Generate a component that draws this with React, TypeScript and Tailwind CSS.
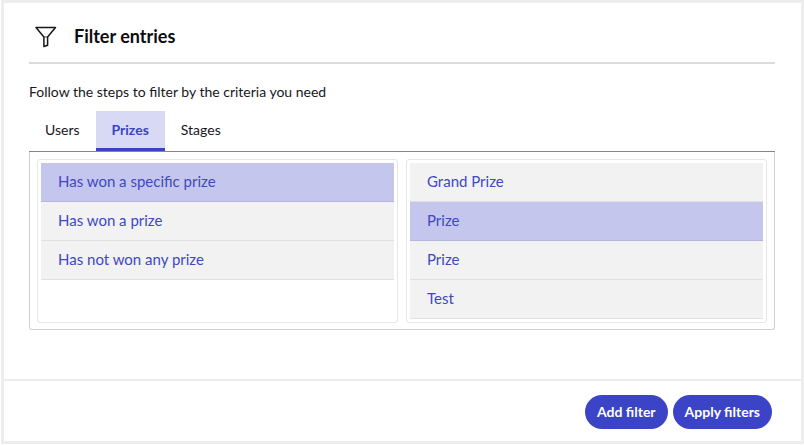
import { useState } from "react"
import clsx from "clsx"

const tabs = ["Users", "Prizes", "Stages"]
const conditions = ["Has won a specific prize", "Has won a prize", "Has not won any prize"]
const prizes = ["Grand Prize", "Prize", "Prize", "Test"]

function FilterIcon() {
  return (
    <svg width="22" height="22" viewBox="0 0 22 22" fill="none" stroke="#17171c" strokeWidth="1.5" strokeLinejoin="round" aria-hidden="true">
      <path d="M1 1.5h19.5L12.6 11v8.2l-3.7 1.3V11z" />
      <path d="M9 11h3.6" strokeWidth="0.8" />
    </svg>
  )
}

type OptionListProps = {
  label: string
  options: string[]
  selected: number
  onSelect: (index: number) => void
}

function OptionList({ label, options, selected, onSelect }: OptionListProps) {
  return (
    <ul aria-label={label} className="min-w-0 flex-1 rounded-[3px] border border-[#e6e6e8] p-[3px]">
      {options.map((option, i) => (
        <li key={i}>
          <button
            type="button"
            aria-pressed={i === selected}
            onClick={() => onSelect(i)}
            className={clsx(
              "block h-[39px] w-full border-b px-[17px] pb-[2px] text-left text-[15px] text-[#4048c4]",
              i === selected ? "border-[#b4b5de] bg-[#c5c6ed]" : "border-[#dfdfe4] bg-[#f2f2f3]"
            )}
          >
            {option}
          </button>
        </li>
      ))}
    </ul>
  )
}

export default function App() {
  const [tab, setTab] = useState("Prizes")
  const [condition, setCondition] = useState(0)
  const [prize, setPrize] = useState(1)

  return (
    <div className="min-h-screen bg-white pb-px pl-px font-['Lato','Open_Sans',sans-serif]">
      <div className="flex min-h-[444px] flex-col border-[3px] border-[#ededed] text-[#17171c]">
        <main className="grow pr-[26px] pl-[25px]">
          {/* --- HEADER --- */}
          <header className="flex h-[61px] items-center gap-[17px] border-b-2 border-[#dcdcdc] pt-2 pl-[6px]">
            <FilterIcon />
            <h1 className="text-[18px] font-bold text-[#0c0c10]">Filter entries</h1>
          </header>

          <p className="mt-[18px] text-[14px] leading-5">Follow the steps to filter by the criteria you need</p>

          {/* --- TABS --- */}
          <div role="tablist" className="mt-[9px] flex border-b border-[#85858c]">
            {tabs.map((name) => (
              <button
                key={name}
                type="button"
                role="tab"
                aria-selected={name === tab}
                onClick={() => setTab(name)}
                className={clsx(
                  "h-10 border-b-3 px-4 text-[14px]",
                  name === tab ? "border-[#3b43c4] bg-[#d8d9f4] font-bold text-[#3b43c4]" : "border-transparent"
                )}
              >
                {name}
              </button>
            ))}
          </div>

          {/* --- OPTIONS --- */}
          <div className="flex gap-2 rounded-b-[3px] border border-t-0 border-[#cfcfd2] px-[7px] pt-[7px] pb-[6px]">
            <OptionList label="Condition" options={conditions} selected={condition} onSelect={setCondition} />
            <OptionList label="Prize" options={prizes} selected={prize} onSelect={setPrize} />
          </div>
        </main>

        <footer className="flex h-[62px] items-center justify-end gap-[5px] border-t-2 border-[#ededed] pt-[2px] pr-[29px]">
          <button type="button" className="h-[34px] rounded-full bg-[#3b43c7] px-3 pb-[2px] text-[14px] font-bold text-white">
            Add filter
          </button>
          <button type="button" className="h-[34px] rounded-full bg-[#3b43c7] px-3 pb-[2px] text-[14px] font-bold text-white">
            Apply filters
          </button>
        </footer>
      </div>
    </div>
  )
}
